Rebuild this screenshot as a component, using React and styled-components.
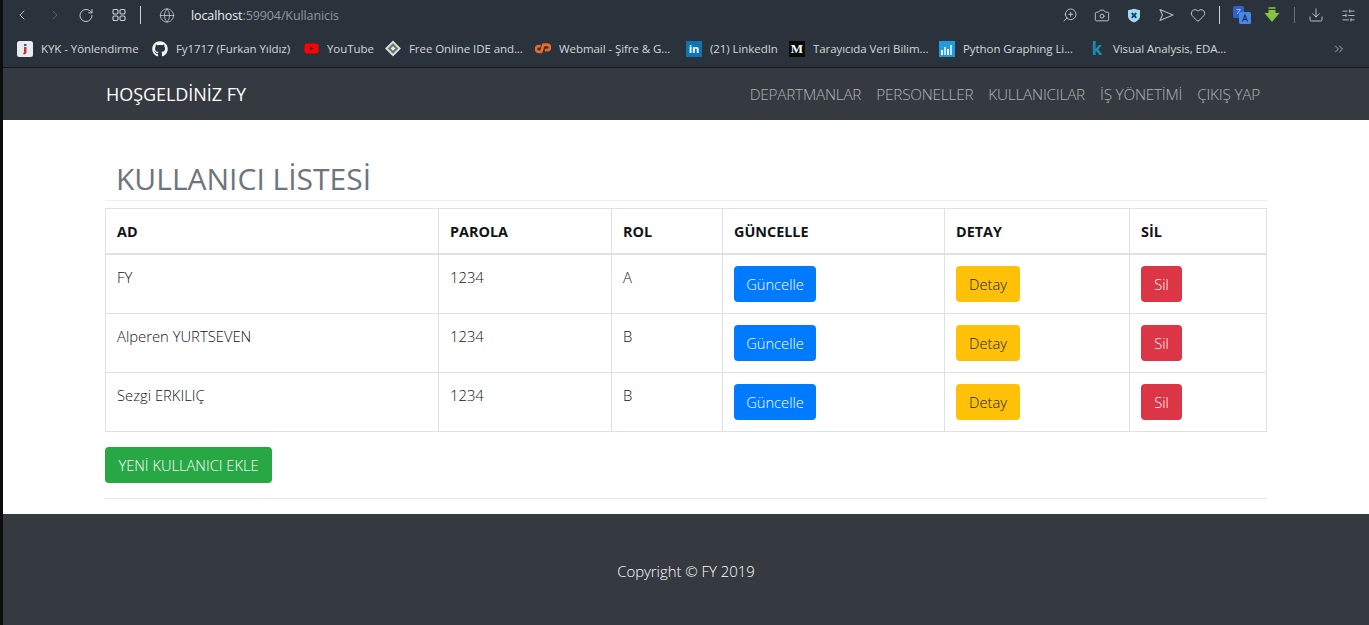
import React from 'react';
import styled, { createGlobalStyle } from 'styled-components';
import {
    ChevronLeft, ChevronRight, RotateCw, Globe, ZoomIn, Camera, Heart,
    Download, SlidersHorizontal, ChevronsRight,
} from 'lucide-react';
import { FaGithub, FaYoutube } from 'react-icons/fa';

const GlobalStyle = createGlobalStyle`
    html, body {
        margin: 0;
        padding: 0;
        background: #0b0d0f;
    }
    * {
        box-sizing: border-box;
    }
`;

const font = `"Open Sans", "Noto Sans", "Liberation Sans", sans-serif`;

const Shell = styled.div`
    height: 625px;
    overflow: hidden;
    font-family: ${font};
    display: flex;
    flex-direction: column;
`;

const Page = styled.div`
    flex: 1;
    margin-left: 3px;
    display: flex;
    flex-direction: column;
`;

const Toolbar = styled.div`
    height: 30px;
    background: #2a333c;
    display: flex;
    align-items: center;
    padding-left: 11px;
    padding-right: 13px;
    color: #d0d3d6;
`;

const ToolIcon = styled.span`
    width: ${(p) => p.$w || 16}px;
    margin-left: ${(p) => p.$ml || 0}px;
    display: flex;
    align-items: center;
    justify-content: center;
    color: ${(p) => p.$color || '#d0d3d6'};
`;

const Divider = styled.span`
    width: 1px;
    height: ${(p) => p.$h || 18}px;
    margin-left: ${(p) => p.$ml}px;
    background: ${(p) => p.$color || '#d0d3d6'};
`;

const Address = styled.div`
    margin-left: 16px;
    font-size: 12.5px;
    color: #8f979e;
    letter-spacing: -0.1px;
    b {
        font-weight: 400;
        color: #eceef0;
    }
`;

const Spacer = styled.div`
    flex: 1;
`;

const Bookmarks = styled.div`
    height: 38px;
    background: #2a333c;
    border-bottom: 1px solid #14181c;
    display: flex;
    align-items: center;
    padding-left: 14px;
    padding-right: 22px;
`;

const Bookmark = styled.div`
    display: flex;
    align-items: center;
    width: ${(p) => p.$w}px;
    flex-shrink: 0;
    font-size: 11.5px;
    letter-spacing: -0.07px;
    color: #d3d6d9;
    white-space: nowrap;
`;

const Fav = styled.span`
    width: 16px;
    height: 16px;
    margin-right: 8px;
    flex-shrink: 0;
    display: flex;
    align-items: center;
    justify-content: center;
    color: ${(p) => p.$color || '#fff'};
    background: ${(p) => p.$bg || 'transparent'};
    font-family: ${(p) => p.$serif ? '"Liberation Serif", serif' : 'inherit'};
    font-size: ${(p) => p.$size || 12}px;
    font-weight: 700;
    line-height: 1;
    letter-spacing: 0;
`;

const Navbar = styled.nav`
    height: 52px;
    background: #343a40;
    display: flex;
    align-items: center;
    justify-content: space-between;
    padding: 0 109px 0 103px;
`;

const Brand = styled.a`
    font-size: 18px;
    color: #fff;
    letter-spacing: -0.05px;
`;

const NavLinks = styled.div`
    display: flex;
    gap: 15px;
`;

const NavLink = styled.a`
    font-size: 15.3px;
    font-weight: 300;
    letter-spacing: -0.2px;
    color: rgba(255, 255, 255, 0.62);
`;

const Main = styled.main`
    height: 394px;
    background: #fff;
    padding: 0 102px;
`;

const PageHeader = styled.div`
    height: 81px;
    padding: 38px 11px 0;
    border-bottom: 1px solid #eeeeee;
    margin-bottom: 7px;
`;

const Title = styled.h2`
    margin: 0;
    font-size: 30px;
    line-height: 42px;
    font-weight: 400;
    color: #6c757d;
`;

const Table = styled.table`
    width: 1161px;
    table-layout: fixed;
    border-collapse: collapse;
    color: #111417;
    font-size: 14.8px;
    font-weight: 300;
`;

const Th = styled.th`
    height: 45px;
    padding: 2px 11px 0;
    text-align: left;
    font-size: 14.4px;
    font-weight: 700;
    border: 1px solid #dee2e6;
    border-bottom-width: 2px;
`;

const Td = styled.td`
    height: 59px;
    padding: 11px 11px 11px;
    vertical-align: top;
    line-height: 23px;
    border: 1px solid #dee2e6;
`;

const Button = styled.a`
    display: inline-block;
    width: ${(p) => p.$w}px;
    height: 36px;
    line-height: 37px;
    text-align: center;
    font-size: 14.7px;
    font-weight: 300;
    border-radius: 4px;
    vertical-align: top;
    color: ${(p) => p.$color || '#fff'};
    background: ${(p) => p.$bg};
`;

const AddRow = styled.div`
    margin-top: 15px;
    padding-bottom: 15px;
    border-bottom: 1px solid #e4e6e8;
`;

const Footer = styled.footer`
    flex: 1;
    background: #343a40;
    color: #fff;
    font-size: 14.9px;
    font-weight: 300;
    display: flex;
    justify-content: center;
    padding-top: 47px;
`;

const columns = [333, 173, 111, 222, 185, 137];
const headers = ['AD', 'PAROLA', 'ROL', 'GÜNCELLE', 'DETAY', 'SİL'];
const users = [
    { name: 'FY', password: '1234', role: 'A' },
    { name: 'Alperen YURTSEVEN', password: '1234', role: 'B' },
    { name: 'Sezgi ERKILIÇ', password: '1234', role: 'B' },
];

function GridIcon() {
    return (
        <svg width="14" height="14" viewBox="0 0 14 14" fill="none" stroke="currentColor" strokeWidth="1.1">
            <rect x="1" y="1.5" width="5" height="4.5" rx="1.2" />
            <rect x="8" y="1.5" width="5" height="4.5" rx="1.2" />
            <rect x="1" y="8" width="5" height="4.5" rx="1.2" />
            <rect x="8" y="8" width="5" height="4.5" rx="1.2" />
        </svg>
    );
}

function PlaneIcon() {
    return (
        <svg width="15" height="14" viewBox="0 0 15 14" fill="none" stroke="currentColor" strokeWidth="1.2" strokeLinejoin="round">
            <path d="M1 1.5 L14 7 L1 12.5 L3.5 7 Z" />
        </svg>
    );
}

function ShieldIcon() {
    return (
        <svg width="14" height="15" viewBox="0 0 14 15">
            <path d="M1 2.2 L7 .8 L13 2.2 V8 C13 11.4 10 13.4 7 14.4 C4 13.4 1 11.4 1 8 Z" fill="#a5d8f3" />
            <path d="M4.7 5 L9.3 9.8 M9.3 5 L4.7 9.8" stroke="#14466e" strokeWidth="1.9" />
        </svg>
    );
}

function TranslateIcon() {
    return (
        <svg width="18" height="18" viewBox="0 0 18 18">
            <rect x="0" y="0" width="11" height="12" rx="1.5" fill="#2f62c4" />
            <rect x="6" y="6" width="12" height="12" rx="1.5" fill="#4a86e8" />
            <path d="M3.5 3.5 H7.5 L4 8" stroke="#9fbdf0" strokeWidth="1" fill="none" />
            <path d="M9.5 15.5 L12 9 L14.5 15.5 M10.4 13.4 H13.6" stroke="#16305f" strokeWidth="1.1" fill="none" />
        </svg>
    );
}

function GreenArrowIcon() {
    return (
        <svg width="16" height="16" viewBox="0 0 16 16">
            <path d="M4.5 0 H11.5 V2 H4.5 Z" fill="#6fa52c" />
            <path d="M4.5 3 H11.5 V6 H15.5 L8 15 L.5 6 H4.5 Z" fill="#86c440" />
        </svg>
    );
}

function KykIcon() {
    return (
        <svg width="16" height="16" viewBox="0 0 16 16">
            <rect width="16" height="16" rx="2.5" fill="#e8ebf0" />
            <rect x="7" y="3" width="2.5" height="2" fill="#3457a6" />
            <path d="M7 6 H9.5 V11 C9.5 12.5 8.6 13.4 6.6 13.4 L6 12 C6.8 12 7 11.6 7 11 Z" fill="#c93040" />
        </svg>
    );
}

function IdeIcon() {
    return (
        <svg width="17" height="17" viewBox="0 0 17 17">
            <path d="M8.5 0 L17 8.5 L8.5 17 L0 8.5 Z" fill="#d9dcd8" />
            <path d="M8.5 3 L14 8.5 L8.5 14 L3 8.5 Z" fill="#5c7a68" />
            <path d="M8.5 6 L11 8.5 L8.5 11 L6 8.5 Z" fill="#e8eae6" />
        </svg>
    );
}

function CpanelIcon() {
    return (
        <svg width="17" height="12" viewBox="0 0 17 12" fill="none" stroke="#e8692c" strokeWidth="3">
            <path d="M6 3 H4 A3 3 0 0 0 4 9 H6.5 L9 1.5 H13 A2.8 2.8 0 0 1 13 7.2 H10.5" />
        </svg>
    );
}

function ChartIcon() {
    return (
        <svg width="16" height="16" viewBox="0 0 16 16">
            <rect width="16" height="16" fill="#1f9be0" />
            <rect x="2" y="9" width="2" height="5" fill="#fff" />
            <rect x="5" y="6" width="2" height="8" fill="#bfe4fa" />
            <rect x="8" y="8" width="2" height="6" fill="#fff" />
            <rect x="11" y="4" width="2" height="10" fill="#bfe4fa" />
        </svg>
    );
}

function App() {
    return (
        <Shell>
            <GlobalStyle />
            <Page>
                <Toolbar>
                    <ToolIcon><ChevronLeft size={28} strokeWidth={1.3} /></ToolIcon>
                    <ToolIcon $ml={17} $color="#5c646c"><ChevronRight size={28} strokeWidth={1.3} /></ToolIcon>
                    <ToolIcon $ml={15}><RotateCw size={17} strokeWidth={1.4} /></ToolIcon>
                    <ToolIcon $ml={17}><GridIcon /></ToolIcon>
                    <Divider $ml={13} />
                    <ToolIcon $ml={18}><Globe size={17} strokeWidth={1.1} /></ToolIcon>
                    <Address><b>localhost</b>:59904/Kullanicis</Address>
                    <Spacer />
                    <ToolIcon><ZoomIn size={18} strokeWidth={1.3} style={{ transform: 'scaleX(-1)' }} /></ToolIcon>
                    <ToolIcon $ml={16}><Camera size={17} strokeWidth={1.3} /></ToolIcon>
                    <ToolIcon $ml={16}><ShieldIcon /></ToolIcon>
                    <ToolIcon $ml={16} $color="#aeb3b8"><PlaneIcon /></ToolIcon>
                    <ToolIcon $ml={16}><Heart size={16} strokeWidth={1.3} /></ToolIcon>
                    <Divider $ml={13} />
                    <ToolIcon $ml={13} $w={18}><TranslateIcon /></ToolIcon>
                    <ToolIcon $ml={13}><GreenArrowIcon /></ToolIcon>
                    <Divider $ml={14} $h={16} $color="#69727a" />
                    <ToolIcon $ml={13}><Download size={16} strokeWidth={1.3} /></ToolIcon>
                    <ToolIcon $ml={16}><SlidersHorizontal size={15} strokeWidth={1.3} /></ToolIcon>
                </Toolbar>
                <Bookmarks>
                    <Bookmark $w={135}><Fav><KykIcon /></Fav>KYK - Yönlendirme</Bookmark>
                    <Bookmark $w={151}><Fav $color="#f4f4f4" $size={16}><FaGithub /></Fav>Fy1717 (Furkan Yıldız)</Bookmark>
                    <Bookmark $w={82}><Fav $color="#f00" $size={15}><FaYoutube /></Fav>YouTube</Bookmark>
                    <Bookmark $w={150}><Fav><IdeIcon /></Fav>Free Online IDE and...</Bookmark>
                    <Bookmark $w={151}><Fav><CpanelIcon /></Fav>Webmail - Şifre &amp; G...</Bookmark>
                    <Bookmark $w={103}><Fav $bg="#0a76b4" $size={11}>in</Fav>(21) LinkedIn</Bookmark>
                    <Bookmark $w={150}><Fav $bg="#0a0a0a" $serif $size={13}>M</Fav>Tarayıcıda Veri Bilim...</Bookmark>
                    <Bookmark $w={150}><Fav><ChartIcon /></Fav>Python Graphing Li...</Bookmark>
                    <Bookmark $w={200}><Fav $color="#1a8cb4" $size={17}>k</Fav>Visual Analysis, EDA...</Bookmark>
                    <Spacer />
                    <ToolIcon><ChevronsRight size={14} color="#d0d3d6" strokeWidth={1.3} /></ToolIcon>
                </Bookmarks>
                <Navbar>
                    <Brand>HOŞGELDİNİZ FY</Brand>
                    <NavLinks>
                        <NavLink>DEPARTMANLAR</NavLink>
                        <NavLink>PERSONELLER</NavLink>
                        <NavLink>KULLANICILAR</NavLink>
                        <NavLink>İŞ YÖNETİMİ</NavLink>
                        <NavLink>ÇIKIŞ YAP</NavLink>
                    </NavLinks>
                </Navbar>
                <Main>
                    <PageHeader>
                        <Title>KULLANICI LİSTESİ</Title>
                    </PageHeader>
                    <Table>
                        <colgroup>
                            {columns.map((w, i) => <col key={i} style={{ width: w }} />)}
                        </colgroup>
                        <thead>
                            <tr>
                                {headers.map((h) => <Th key={h}>{h}</Th>)}
                            </tr>
                        </thead>
                        <tbody>
                            {users.map((u) => (
                                <tr key={u.name}>
                                    <Td>{u.name}</Td>
                                    <Td>{u.password}</Td>
                                    <Td>{u.role}</Td>
                                    <Td><Button $w={82} $bg="#007bff">Güncelle</Button></Td>
                                    <Td><Button $w={64} $bg="#ffc107" $color="#212529">Detay</Button></Td>
                                    <Td><Button $w={41} $bg="#dc3545">Sil</Button></Td>
                                </tr>
                            ))}
                        </tbody>
                    </Table>
                    <AddRow>
                        <Button $w={167} $bg="#28a745">YENİ KULLANICI EKLE</Button>
                    </AddRow>
                </Main>
                <Footer>Copyright © FY 2019</Footer>
            </Page>
        </Shell>
    );
}

export default App;
